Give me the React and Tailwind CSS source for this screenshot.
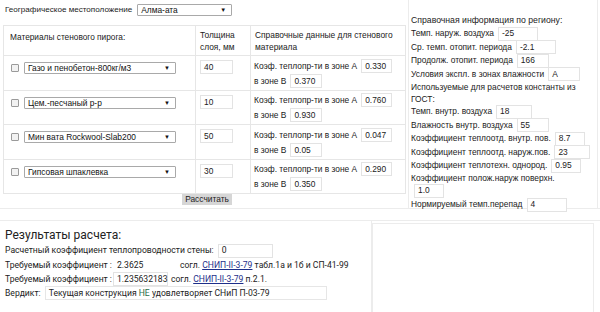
import React from "react";

const Box = ({ v, w = "w-[32px]", cls = "" }) => (
  <span className={`inline-flex items-center h-[14px] ${w} shrink-0 border border-[#e3e3e3] bg-white px-[3px] text-[8.4px] text-[#222] whitespace-nowrap ${cls}`}>{v}</span>
);

const Sel = ({ v, w }) => (
  <div className={`flex items-center justify-between h-[12px] ${w} shrink-0 border border-[#a9a9a9] rounded-[1px] bg-white pl-[3px] pr-[5px] text-[8.4px] text-[#111]`}>
    <span>{v}</span>
    <span className="text-[6px]">▼</span>
  </div>
);

const rows = [
  { mat: "Газо и пенобетон-800кг/м3", t: "40", a: "0.330", b: "0.370" },
  { mat: "Цем.-песчаный р-р", t: "10", a: "0.760", b: "0.930" },
  { mat: "Мин вата Rockwool-Slab200", t: "50", a: "0.047", b: "0.05" },
  { mat: "Гипсовая шпаклевка", t: "30", a: "0.290", b: "0.350" },
];

const info = [
  ["Темп. наруж. воздуха", "-25", "w-[40px]"],
  ["Ср. темп. отопит. периода", "-2.1", "w-[40px]"],
  ["Продолж. отопит. периода", "166", "w-[32px]"],
  ["Условия экспл. в зонах влажности", "A", "w-[32px]"],
];

const consts = [
  ["Темп. внутр. воздуха", "18", "w-[36px]"],
  ["Влажность внутр. воздуха", "55", "w-[32px]"],
  ["Коэффициент теплоотд. внутр. пов.", "8.7", "w-[30px]"],
  ["Коэффициент теплоотд. наруж.пов.", "23", "w-[36px]"],
  ["Коэффициент теплотехн. однород.", "0.95", "w-[30px]"],
];

export default function App() {
  return (
    <div className="w-[600px] h-[312px] overflow-hidden bg-white text-[#222]" style={{ fontFamily: "'Liberation Sans', Arial, sans-serif" }}>
      <div className="flex h-[209px] border-b border-[#ececec]">
        {/* left */}
        <div className="w-[407px] pl-[3px] pt-[3px]">
          <div className="flex items-center gap-[5px] h-[14px] pl-[2px] text-[8.1px]">
            <span>Географическое местоположение</span>
            <Sel v="Алма-ата" w="w-[95px]" />
          </div>
          <table className="mt-[8px] table-fixed w-[402px] border-collapse text-[8.4px] leading-[12px] whitespace-nowrap">
            <colgroup>
              <col className="w-[192px]" />
              <col className="w-[55px]" />
              <col className="w-[155px]" />
            </colgroup>
            <tbody>
              <tr className="h-[30px] align-top">
                <td className="border border-[#e6e6e6] pl-[6px] pt-[5px] text-[8.3px]">Материалы стенового пирога:</td>
                <td className="border border-[#e6e6e6] pl-[4px] pt-[3px]">Толщина<br />слоя, мм</td>
                <td className="border border-[#e6e6e6] pl-[4px] pt-[3px]">Справочные данные для стенового<br />материала</td>
              </tr>
              {rows.map((r, i) => (
                <tr key={i} className="h-[34.5px] align-top">
                  <td className="border border-[#e6e6e6] pl-[7px] pt-[6px]">
                    <div className="flex items-center gap-[5px]">
                      <span className="w-[8px] h-[8px] border border-[#9a9a9a] rounded-[1px] bg-[#f2f2f2]" />
                      <Sel v={r.mat} w="w-[152px]" />
                    </div>
                  </td>
                  <td className="border border-[#e6e6e6] pl-[4px] pt-[4px]">
                    <Box v={r.t} w="w-[33px]" />
                  </td>
                  <td className="border border-[#e6e6e6] pl-[3px] pt-[2px]">
                    <div className="flex items-center gap-[4px] h-[15px]">
                      <span>Коэф. теплопр-ти в зоне А</span>
                      <Box v={r.a} w="w-[31px]" />
                    </div>
                    <div className="flex items-center gap-[4px] h-[15px]">
                      <span>в зоне В</span>
                      <Box v={r.b} w="w-[32px]" />
                    </div>
                  </td>
                </tr>
              ))}
            </tbody>
          </table>
          <div className="flex justify-center w-[402px] pl-[6px]">
            <span className="h-[11px] px-[3px] bg-[#d6d6d6] text-[8.4px] leading-[11px] text-[#222]">Рассчитать</span>
          </div>
        </div>
        {/* right */}
        <div className="w-[190px] ml-[1px] border-l border-r border-[#ececec] pl-[2px] pt-[14px] text-[8.4px] leading-[11px] whitespace-nowrap">
          <div className="h-[13px] flex items-center text-[8.7px]">Справочная информация по региону:</div>
          {info.map(([l, v, w], i) => (
            <div key={i} className="flex items-center gap-[4px] h-[13.5px]">
              <span>{l}</span>
              <Box v={v} w={w} cls="h-[13px]" />
            </div>
          ))}
          <div className="mt-[1px] leading-[11.5px]">Используемые для расчетов константы из<br />ГОСТ:</div>
          {consts.map(([l, v, w], i) => (
            <div key={i} className="flex items-center gap-[4px] h-[13.5px]">
              <span>{l}</span>
              <Box v={v} w={w} cls="h-[13px]" />
            </div>
          ))}
          <div className="h-[11px]">Коэффициент полож.наруж поверхн.</div>
          <div className="pl-[3px]"><Box v="1.0" w="w-[30px]" cls="h-[13px]" /></div>
          <div className="flex items-center gap-[4px] h-[14px]">
            <span>Нормируемый темп.перепад</span>
            <Box v="4" w="w-[40px]" cls="h-[13px]" />
          </div>
        </div>
      </div>
      {/* results */}
      <div className="flex h-[100px] mt-[11px] border-t border-[#ececec] whitespace-nowrap" style={{ fontFamily: "Roboto, 'Liberation Sans', sans-serif" }}>
        <div className="w-[372px] shrink-0 border-r border-[#ececec] pl-[5px] pt-[7px] text-[8.6px]">
          <div className="text-[12px] leading-[14px] text-[#222] mb-[1px]">Результаты расчета:</div>
          <div className="flex items-center gap-[4px] h-[15px]">
            <span>Расчетный коэффициент теплопроводности стены:</span>
            <Box v="0" w="w-[55px]" cls="text-[8.6px]" />
          </div>
          <div className="flex items-center h-[14px]">
            <span>Требуемый коэффициент :</span>
            <Box v="2.3625" w="w-[55px]" cls="text-[8.6px] border-transparent ml-[1px]" />
            <span className="ml-[12px]">согл. <span className="underline text-[#1e2f8a]">СНИП-II-3-79</span> табл.1а и 1б и СП-41-99</span>
          </div>
          <div className="flex items-center h-[14px]">
            <span>Требуемый коэффициент :</span>
            <Box v="1.235632183" w="w-[55px]" cls="text-[8.6px] ml-[1px]" />
            <span className="ml-[3px]">согл. <span className="underline text-[#1e2f8a]">СНИП-II-3-79</span> п.2.1.</span>
          </div>
          <div className="flex items-center h-[14px]">
            <span>Вердикт:</span>
            <div className="flex shrink-0 items-center h-[14px] w-[282px] min-w-[282px] ml-[4px] border border-[#e6e6e6] px-[3px] text-[8.6px]">
              <span>Текущая конструкция&nbsp;</span>
              <span className="text-[#2a6e4a]">НЕ</span>
              <span>&nbsp;удовлетворяет СНиП П-03-79</span>
            </div>
          </div>
        </div>
        <div className="w-[222px] mt-[2px] border-l border-r border-t border-[#ececec]" />
      </div>
    </div>
  );
}
